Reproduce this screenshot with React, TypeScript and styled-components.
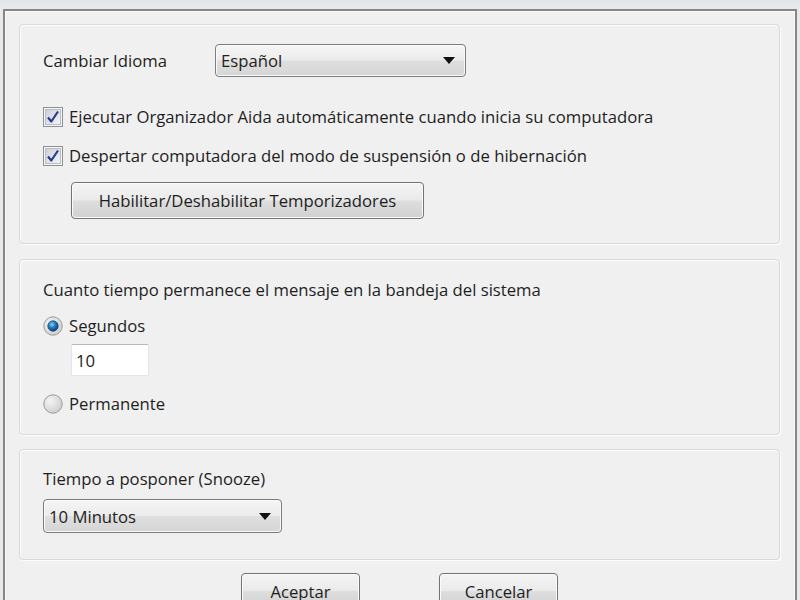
import React from "react";
import styled, { createGlobalStyle } from "styled-components";

const Global = createGlobalStyle`
  html, body { margin: 0; padding: 0; background: #e4e8eb; }
  body { font-family: "Open Sans", "Noto Sans", sans-serif; color: #1e1e1e; overflow: hidden; }
  * { box-sizing: border-box; }
`;

const FS = "16.7px";

const Screen = styled.div`
  width: 800px;
  height: 600px;
  padding: 9px 3px 0 3px;
  background: linear-gradient(#e2e6ea, #e8ebee 9px, #e9e9e9 9px);
`;

const Window = styled.div`
  height: 591px;
  border: 2px solid #868686;
  border-bottom: none;
  background: #f0f0f0;
  box-shadow: inset 1px 1px 0 #fbfbfb, inset -1px 0 0 #fbfbfb;
  padding: 13px 15px 0 14px;
  display: flex;
  flex-direction: column;
`;

const Group = styled.div<{ $pt: number; $pb: number; $mt?: number }>`
  border: 1px solid #d9d9d9;
  border-radius: 4px;
  box-shadow: inset 1px 1px 0 #fdfdfd, 1px 1px 0 #fdfdfd;
  padding: ${(p) => p.$pt}px 20px ${(p) => p.$pb}px 23px;
  margin-top: ${(p) => p.$mt ?? 0}px;
  display: flex;
  flex-direction: column;
  align-items: flex-start;
`;

const Row = styled.div<{ $mt?: number; $indent?: number }>`
  display: flex;
  align-items: center;
  margin-top: ${(p) => p.$mt ?? 0}px;
  margin-left: ${(p) => p.$indent ?? 0}px;
  font-size: ${FS};
  line-height: 20px;
  white-space: nowrap;
`;

const FieldLabel = styled.span`
  width: 172px;
`;

const Text = styled.div<{ $mt?: number }>`
  font-size: ${FS};
  line-height: 20px;
  margin-top: ${(p) => p.$mt ?? 0}px;
  white-space: nowrap;
`;

const Select = styled.div<{ $w: number; $h: number; $mt?: number }>`
  width: ${(p) => p.$w}px;
  height: ${(p) => p.$h}px;
  margin-top: ${(p) => p.$mt ?? 0}px;
  border: 1px solid #7c7c7c;
  border-radius: 4px;
  background: linear-gradient(#f5f5f5 0%, #ececec 48%, #dedede 52%, #d6d6d6 100%);
  box-shadow: inset 0 0 0 1px #fafafa;
  display: flex;
  align-items: center;
  justify-content: space-between;
  padding: 0 10px 0 5px;
  font-size: ${FS};
`;

const Arrow = styled.span`
  width: 0;
  height: 0;
  border-left: 6px solid transparent;
  border-right: 6px solid transparent;
  border-top: 7px solid #111;
`;

const Button = styled.div<{ $w: number; $h: number; $mt?: number; $indent?: number }>`
  width: ${(p) => p.$w}px;
  height: ${(p) => p.$h}px;
  margin-top: ${(p) => p.$mt ?? 0}px;
  margin-left: ${(p) => p.$indent ?? 0}px;
  border: 1px solid #737373;
  border-radius: 4px;
  background: linear-gradient(#f4f4f4 0%, #ebebeb 48%, #dddddd 52%, #d1d1d1 100%);
  box-shadow: inset 0 0 0 1px #fbfbfb;
  display: flex;
  align-items: center;
  justify-content: center;
  font-size: ${FS};
  color: #1e1e1e;
`;

const Input = styled.div`
  width: 78px;
  height: 32px;
  margin-top: 8px;
  margin-left: 28px;
  background: #fff;
  border: 1px solid #e2e6ea;
  border-top-color: #b5b8be;
  border-radius: 2px;
  display: flex;
  align-items: center;
  padding-left: 4px;
  font-size: ${FS};
`;

const Mark = styled.span`
  display: inline-flex;
  width: 20px;
  height: 20px;
  margin-right: 6px;
`;

const Buttons = styled.div`
  display: flex;
  justify-content: center;
  gap: 79px;
  margin-top: 13px;
`;

const Check = () => (
  <Mark>
    <svg width="20" height="20" viewBox="0 0 20 20">
      <defs>
        <linearGradient id="cb" x1="0" y1="0" x2="1" y2="1">
          <stop offset="0" stopColor="#cbd0d8" />
          <stop offset="1" stopColor="#f2f4f7" />
        </linearGradient>
      </defs>
      <rect x="0.5" y="0.5" width="19" height="19" fill="#f7f7f7" stroke="#8e8f8f" />
      <rect x="2.5" y="2.5" width="15" height="15" fill="url(#cb)" stroke="#b9bec6" />
      <path d="M5 10.5 L8.3 14.5 L15 4.5" fill="none" stroke="#2a3a8c" strokeWidth="2.2" strokeLinejoin="round" />
    </svg>
  </Mark>
);

const Radio = ({ on }: { on?: boolean }) => (
  <Mark>
    <svg width="20" height="20" viewBox="0 0 20 20">
      <defs>
        <radialGradient id="rb" cx="0.35" cy="0.35" r="0.7">
          <stop offset="0" stopColor="#f4f4f4" />
          <stop offset="1" stopColor="#cfcfcf" />
        </radialGradient>
        <radialGradient id="rd" cx="0.4" cy="0.35" r="0.65">
          <stop offset="0" stopColor="#8fd0f5" />
          <stop offset="0.5" stopColor="#1f7ec0" />
          <stop offset="1" stopColor="#0b3f70" />
        </radialGradient>
      </defs>
      <circle cx="10" cy="10" r="9.2" fill="url(#rb)" stroke="#9a9a9a" />
      {on && <circle cx="10" cy="10" r="5.2" fill="url(#rd)" stroke="#1b4f82" strokeWidth="0.8" />}
    </svg>
  </Mark>
);

export default function App() {
  return (
    <>
      <Global />
      <Screen>
        <Window>
          <Group $pt={19} $pb={24}>
            <Row>
              <FieldLabel>Cambiar Idioma</FieldLabel>
              <Select $w={251} $h={33}>
                <span>Español</span>
                <Arrow />
              </Select>
            </Row>
            <Row $mt={30}>
              <Check />
              Ejecutar Organizador Aida automáticamente cuando inicia su computadora
            </Row>
            <Row $mt={19}>
              <Check />
              Despertar computadora del modo de suspensión o de hibernación
            </Row>
            <Button $w={353} $h={37} $mt={16} $indent={28}>
              Habilitar/Deshabilitar Temporizadores
            </Button>
          </Group>

          <Group $pt={20} $pb={20} $mt={15}>
            <Text>Cuanto tiempo permanece el mensaje en la bandeja del sistema</Text>
            <Row $mt={16}>
              <Radio on />
              Segundos
            </Row>
            <Input>10</Input>
            <Row $mt={18}>
              <Radio />
              Permanente
            </Row>
          </Group>

          <Group $pt={19} $pb={26} $mt={14}>
            <Text>Tiempo a posponer (Snooze)</Text>
            <Select $w={239} $h={34} $mt={10}>
              <span>10 Minutos</span>
              <Arrow />
            </Select>
          </Group>

          <Buttons>
            <Button $w={119} $h={36}>Aceptar</Button>
            <Button $w={119} $h={36}>Cancelar</Button>
          </Buttons>
        </Window>
      </Screen>
    </>
  );
}
